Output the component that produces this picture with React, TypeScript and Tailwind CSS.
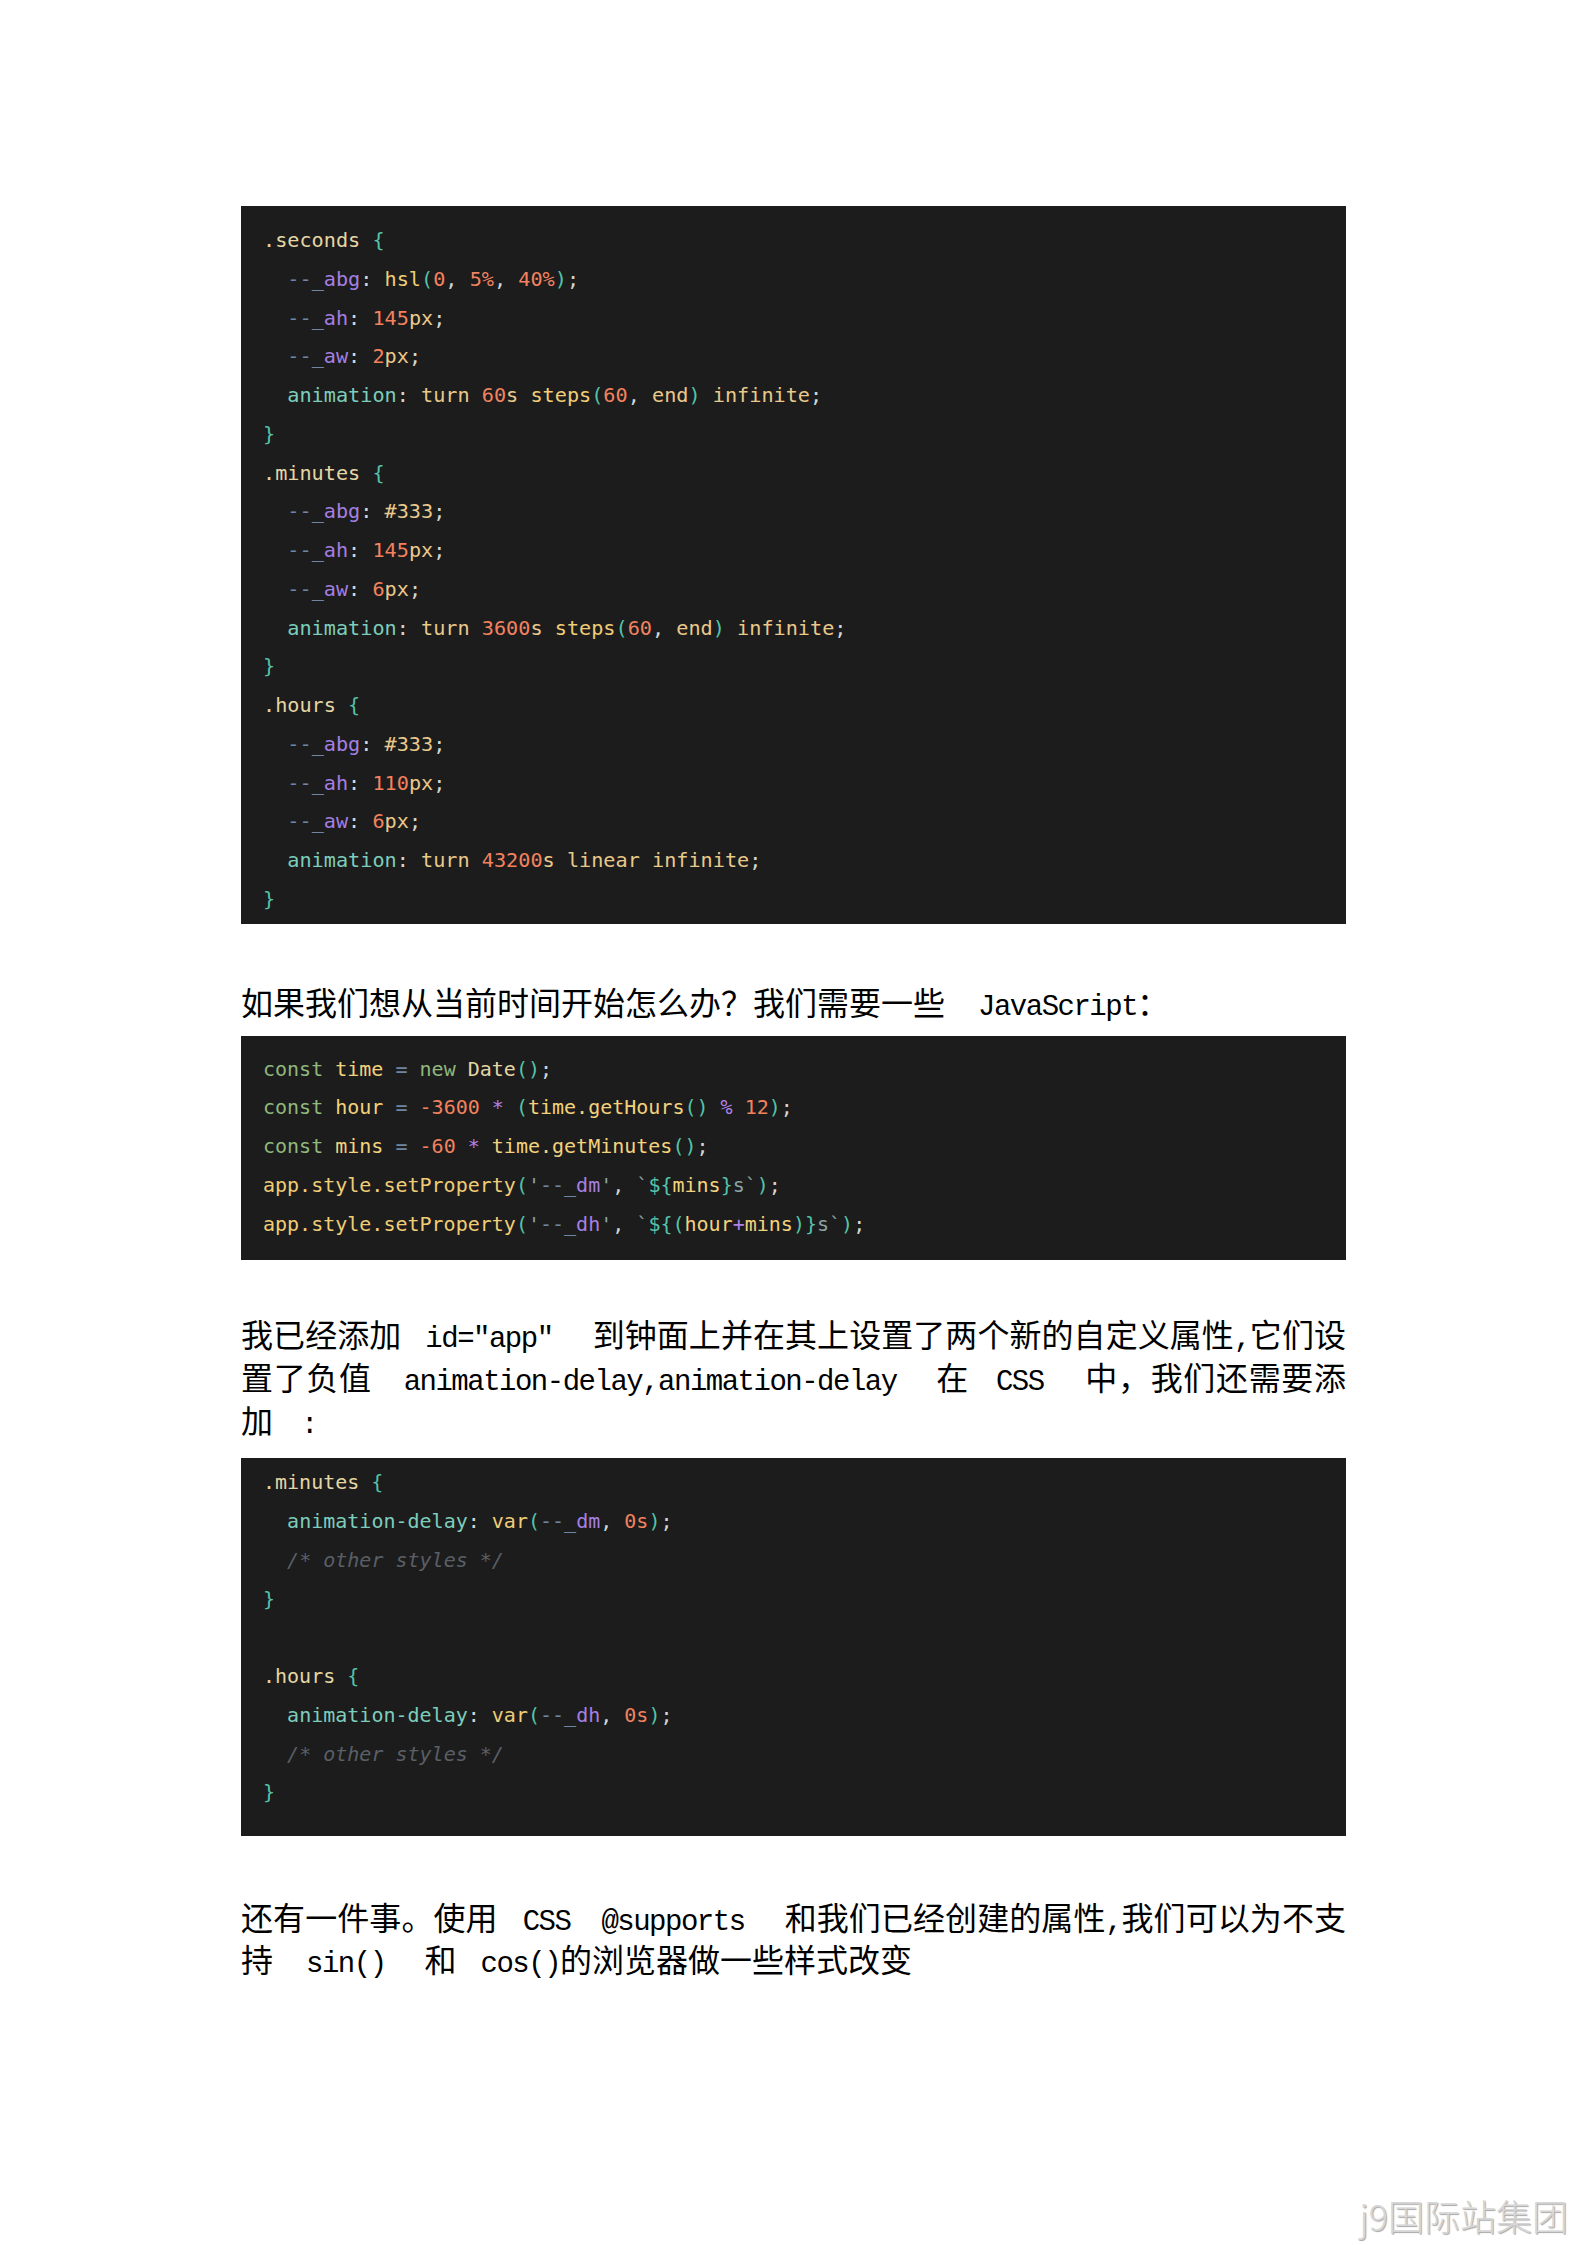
import React from "react";

type Tok = [string, string];

// syntax colours
const SEL = "text-[#e4d6a4]";
const BR = "text-[#54c3aa]";
const DASH = "text-[#6f86a3]";
const VAR = "text-[#a57fe2]";
const PUN = "text-[#d2d6d4]";
const FN = "text-[#f0cc76]";
const NUM = "text-[#f2825f]";
const PROP = "text-[#7ccdbb]";
const VAL = "text-[#e9c98b]";
const KW = "text-[#8fb87c]";
const ID = "text-[#f3d27c]";
const OP = "text-[#b183ea]";
const STR = "text-[#8aa3a3]";
const CM = "text-[#5a5f66] italic";

const customProp = (name: string, value: Tok[]): Tok[] => [
  [PUN, "  "],
  [DASH, "--"],
  [DASH, "_"],
  [VAR, name],
  [PUN, ": "],
  ...value,
  [PUN, ";"],
];

const animLine = (dur: string, timing: Tok[]): Tok[] => [
  [PUN, "  "],
  [PROP, "animation"],
  [PUN, ": "],
  [VAL, "turn "],
  [NUM, dur],
  [VAL, "s "],
  ...timing,
  [VAL, " infinite"],
  [PUN, ";"],
];

const steps: Tok[] = [
  [FN, "steps"],
  [BR, "("],
  [NUM, "60"],
  [PUN, ", "],
  [VAL, "end"],
  [BR, ")"],
];

const open = (sel: string): Tok[] => [
  [SEL, sel],
  [BR, " {"],
];
const close: Tok[] = [[BR, "}"]];

const block1: Tok[][] = [
  open(".seconds"),
  customProp("abg", [
    [FN, "hsl"],
    [BR, "("],
    [NUM, "0"],
    [PUN, ", "],
    [NUM, "5%"],
    [PUN, ", "],
    [NUM, "40%"],
    [BR, ")"],
  ]),
  customProp("ah", [
    [NUM, "145"],
    [VAL, "px"],
  ]),
  customProp("aw", [
    [NUM, "2"],
    [VAL, "px"],
  ]),
  animLine("60", steps),
  close,
  open(".minutes"),
  customProp("abg", [[VAL, "#333"]]),
  customProp("ah", [
    [NUM, "145"],
    [VAL, "px"],
  ]),
  customProp("aw", [
    [NUM, "6"],
    [VAL, "px"],
  ]),
  animLine("3600", steps),
  close,
  open(".hours"),
  customProp("abg", [[VAL, "#333"]]),
  customProp("ah", [
    [NUM, "110"],
    [VAL, "px"],
  ]),
  customProp("aw", [
    [NUM, "6"],
    [VAL, "px"],
  ]),
  animLine("43200", [[VAL, "linear"]]),
  close,
];

const setProp = (name: string, inner: Tok[]): Tok[] => [
  [FN, "app.style.setProperty"],
  [BR, "("],
  [STR, "'"],
  [DASH, "--"],
  [DASH, "_"],
  [VAR, name],
  [STR, "'"],
  [PUN, ", "],
  [STR, "`"],
  [BR, "${"],
  ...inner,
  [BR, "}"],
  [STR, "s`"],
  [BR, ")"],
  [PUN, ";"],
];

const block2: Tok[][] = [
  [
    [KW, "const "],
    [ID, "time"],
    [DASH, " = "],
    [KW, "new "],
    [SEL, "Date"],
    [BR, "()"],
    [PUN, ";"],
  ],
  [
    [KW, "const "],
    [ID, "hour"],
    [DASH, " = "],
    [NUM, "-3600"],
    [OP, " * "],
    [BR, "("],
    [ID, "time.getHours"],
    [BR, "()"],
    [OP, " % "],
    [NUM, "12"],
    [BR, ")"],
    [PUN, ";"],
  ],
  [
    [KW, "const "],
    [ID, "mins"],
    [DASH, " = "],
    [NUM, "-60"],
    [OP, " * "],
    [ID, "time.getMinutes"],
    [BR, "()"],
    [PUN, ";"],
  ],
  setProp("dm", [[ID, "mins"]]),
  setProp("dh", [
    [BR, "("],
    [ID, "hour"],
    [OP, "+"],
    [ID, "mins"],
    [BR, ")"],
  ]),
];

const delayLine = (name: string): Tok[] => [
  [PUN, "  "],
  [PROP, "animation-delay"],
  [PUN, ": "],
  [FN, "var"],
  [BR, "("],
  [DASH, "--"],
  [DASH, "_"],
  [VAR, name],
  [PUN, ", "],
  [NUM, "0s"],
  [BR, ")"],
  [PUN, ";"],
];

const comment: Tok[] = [
  [PUN, "  "],
  [CM, "/* other styles */"],
];

const block3: Tok[][] = [
  open(".minutes"),
  delayLine("dm"),
  comment,
  close,
  [],
  open(".hours"),
  delayLine("dh"),
  comment,
  close,
];

function CodeBlock({ lines, className }: { lines: Tok[][]; className: string }) {
  return (
    <div
      className={
        "bg-[#1c1c1c] pl-[22px] font-['DejaVu_Sans_Mono',monospace] " + className
      }
    >
      {lines.map((line, i) => (
        <div key={i} className="h-[38.75px] leading-[38.75px] whitespace-pre">
          {line.map(([cls, text], j) => (
            <span key={j} className={cls}>
              {text}
            </span>
          ))}
        </div>
      ))}
    </div>
  );
}

// half-width latin runs inside the chinese paragraphs
const latin =
  "font-['Liberation_Mono',monospace] text-[29px] tracking-[-1.5px] leading-none";

export default function App() {
  return (
    <div className="min-h-[2245px] flex flex-col bg-white">
      <div className="w-[1105px] mx-auto pt-[206px] text-black font-['Noto_Sans_CJK_SC',sans-serif]">
        <CodeBlock lines={block1} className="pt-[15px] pb-[5px] text-[20.2px]" />

        <p className="mt-[56px] text-[32px] leading-[43px] whitespace-nowrap">
          如果我们想从当前时间开始怎么办？我们需要一些
          <span className={latin + " ml-[33px]"}>JavaScript</span>：
        </p>

        <CodeBlock lines={block2} className="mt-[13px] pt-[14px] pb-[16.5px] text-[20px]" />

        <p className="mt-[52px] text-[32px] leading-[43px] text-justify">
          我已经添加
          <span className={latin + " ml-[24px] mr-[40px]"}>id="app"</span>
          到钟面上并在其上设置了两个新的自定义属性<span className={latin}>,</span>它们设置了负值
          <span className={latin + " ml-[32px] mr-[39px]"}>
            animation-delay,animation-delay
          </span>
          在<span className={latin + " ml-[27px] mr-[41px]"}>CSS</span>
          中，我们还需要添加<span className={latin + " ml-[28px]"}>:</span>
        </p>

        <CodeBlock lines={block3} className="mt-[17.5px] pt-[5px] pb-[24px] text-[20px]" />

        <p className="mt-[59px] text-[32px] leading-[42px] text-justify">
          还有一件事。使用<span className={latin + " ml-[25px] mr-[31px]"}>CSS</span>
          <span className={latin + " mr-[40px]"}>@supports</span>
          和我们已经创建的属性<span className={latin}>,</span>我们可以为不支持
          <span className={latin + " ml-[33px] mr-[39px]"}>sin()</span>和
          <span className={latin + " ml-[24px]"}>cos()</span>的浏览器做一些样式改变
        </p>
      </div>

      <div className="mt-auto self-end mr-[19px] mb-[11px] text-[36px] leading-[38px] font-light text-[#d6d6d6] font-['Noto_Sans_CJK_SC',sans-serif] [text-shadow:1px_1px_1px_rgba(0,0,0,0.35)]">
        j9国际站集团
      </div>
    </div>
  );
}
